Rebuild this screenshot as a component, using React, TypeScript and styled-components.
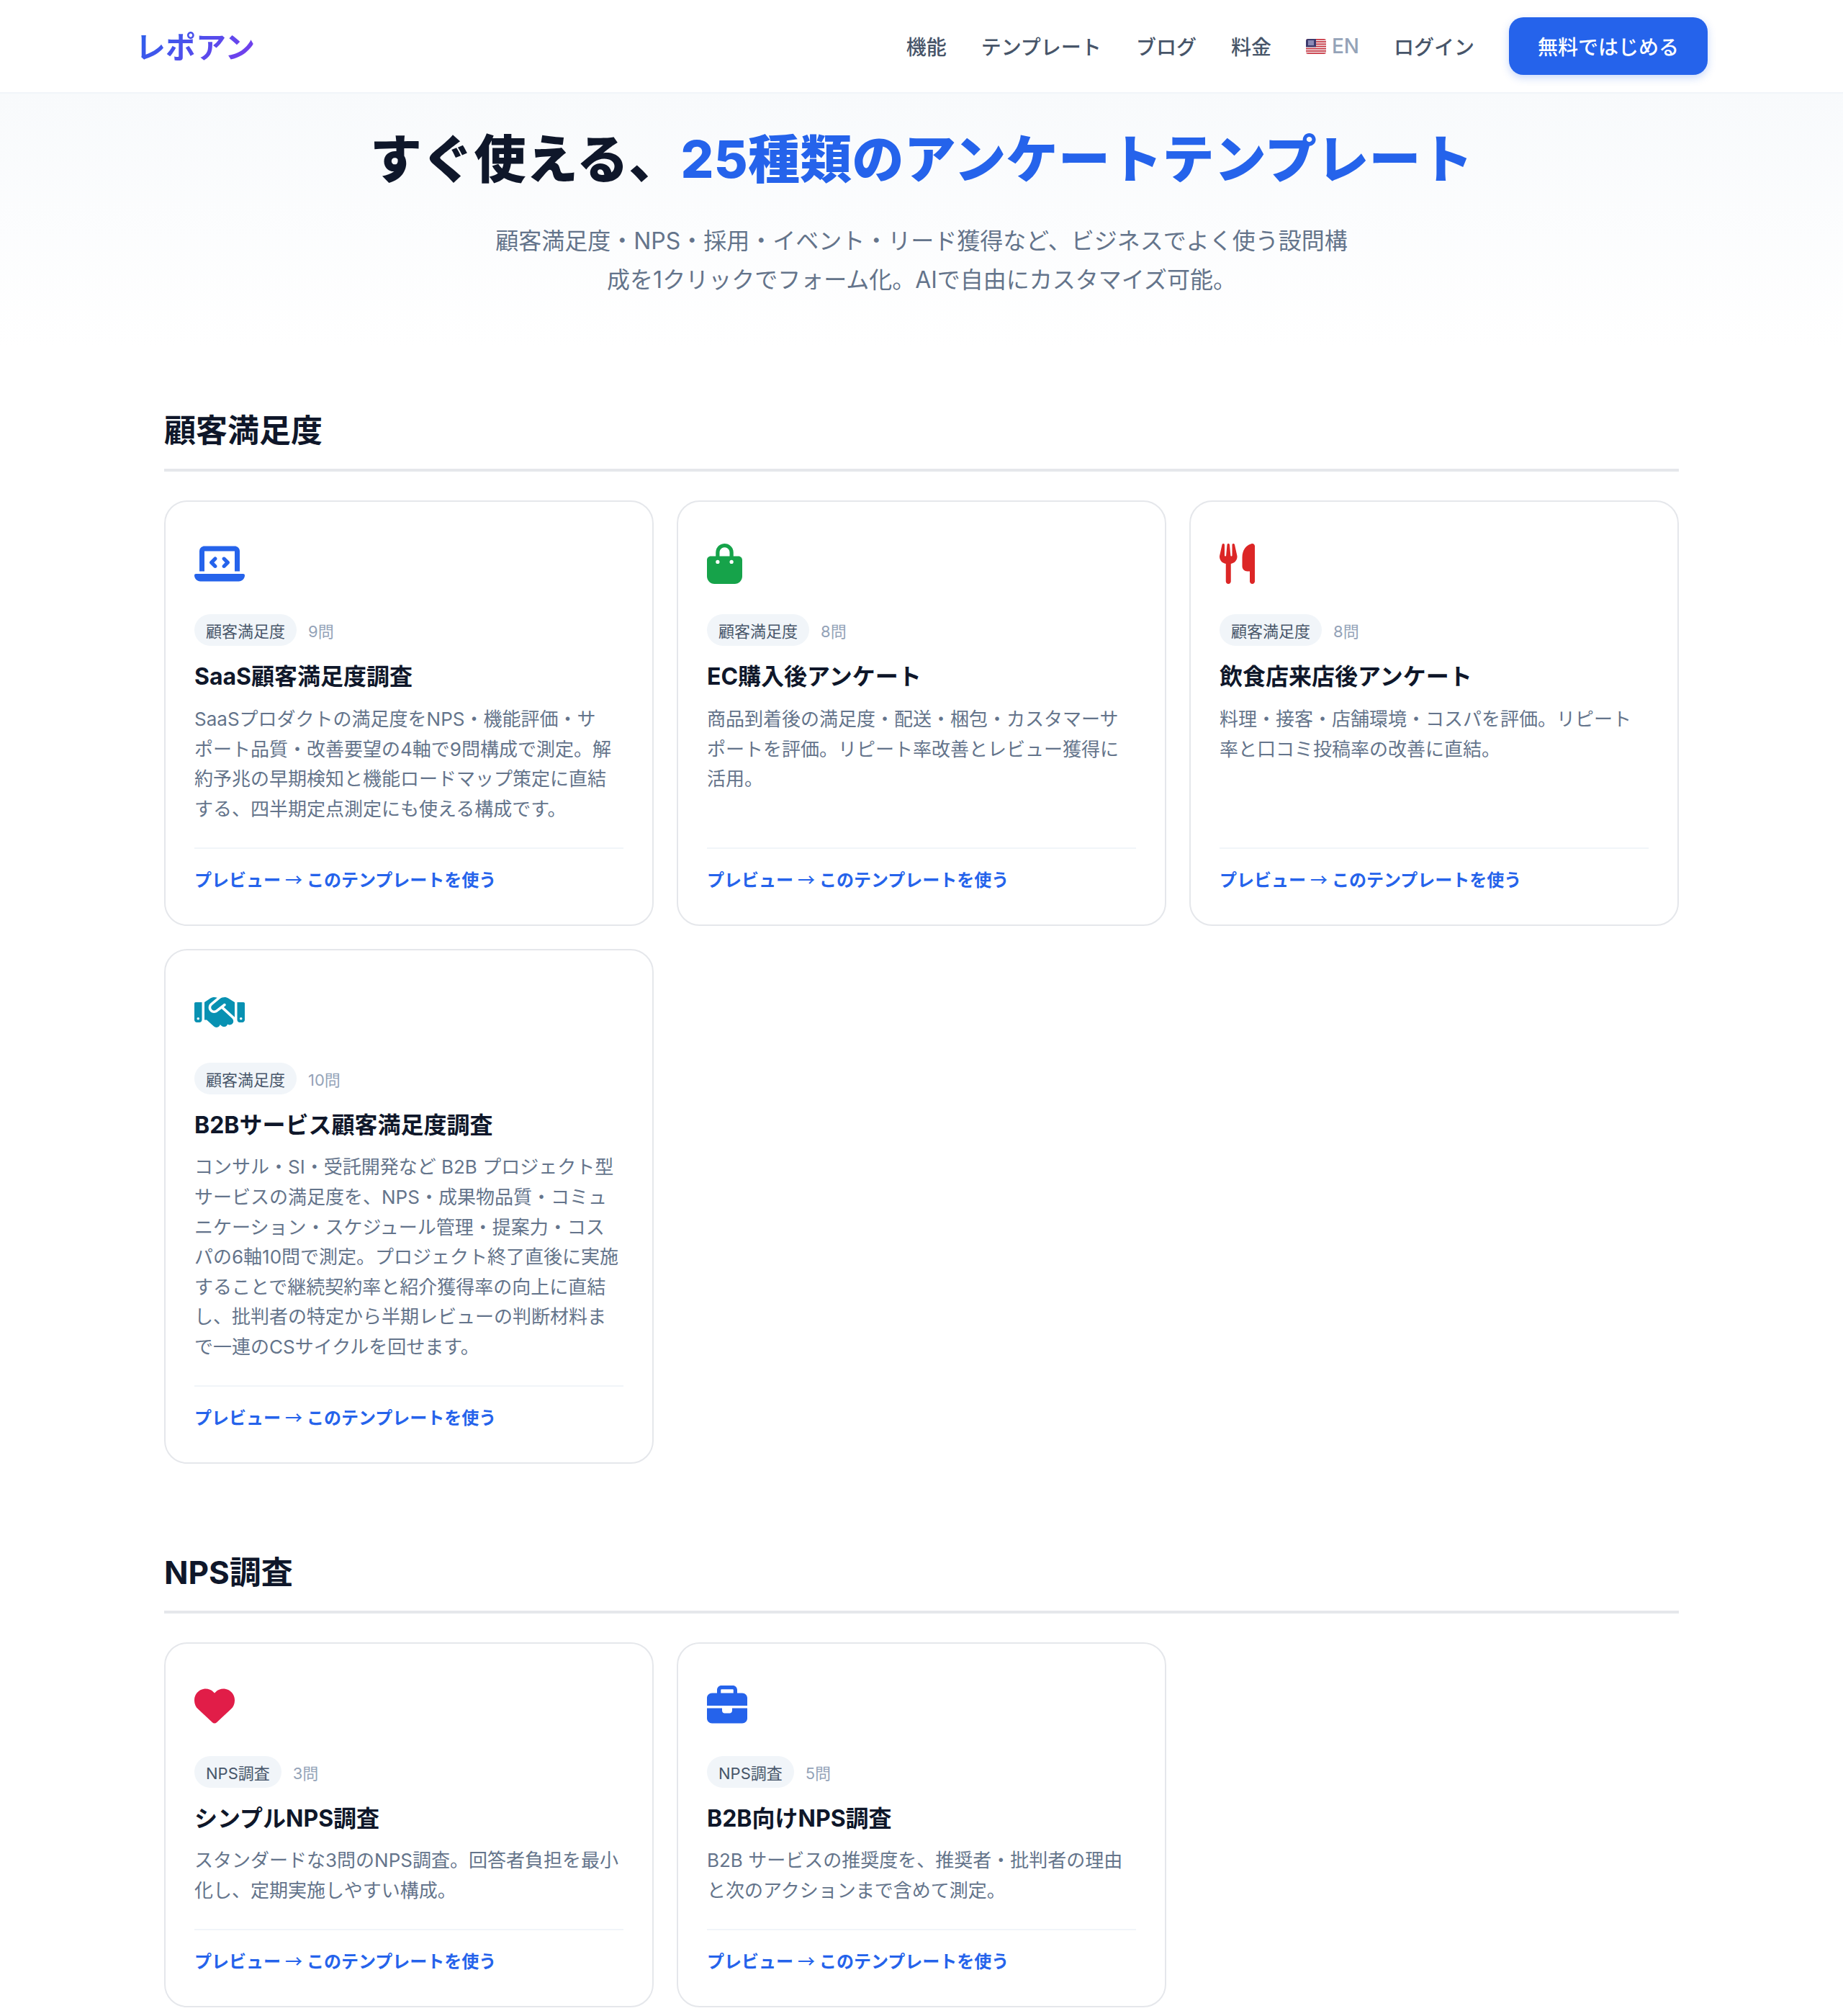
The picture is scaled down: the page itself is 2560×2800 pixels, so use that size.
import React from "react";
import styled, { createGlobalStyle } from "styled-components";
import { FaLaptopCode, FaBagShopping, FaUtensils, FaHandshake, FaHeart, FaBriefcase } from "react-icons/fa6";

const Global = createGlobalStyle`
  * { box-sizing: border-box; }
  html, body { margin: 0; padding: 0; background: #fff; }
  body { font-family: Inter, "Noto Sans CJK JP", sans-serif; color: #0f172a; }
`;

const Page = styled.div`
  line-break: strict;
`;
const Nav = styled.header`
  height: 130px;
  border-bottom: 2px solid #f1f5f9;
  background: #fff;
`;
const NavInner = styled.div`
  width: 2184px;
  height: 128px;
  margin: 0 auto;
  display: flex;
  align-items: center;
  justify-content: space-between;
`;
const Logo = styled.div`
  margin-top: -4px;
  font-size: 42px;
  font-weight: 700;
  background: linear-gradient(135deg, #2563eb, #7c3aed);
  -webkit-background-clip: text;
  background-clip: text;
  color: transparent;
`;
const NavLinks = styled.nav`
  display: flex;
  align-items: center;
  gap: 48px;
`;
const NavLink = styled.a`
  font-size: 28px;
  font-weight: 500;
  color: #475569;
`;
const Lang = styled.a`
  display: flex;
  align-items: center;
  gap: 8px;
  font-size: 28px;
  font-weight: 500;
  color: #94a3b8;
`;
const CTA = styled.a`
  display: flex;
  align-items: center;
  height: 80px;
  padding: 0 40px;
  border-radius: 20px;
  background: #2563eb;
  color: #fff;
  font-size: 28px;
  font-weight: 500;
  box-shadow: 0 4px 12px rgba(37, 99, 235, 0.25);
`;
const Hero = styled.section`
  padding: 48px 0 65px;
  background: linear-gradient(180deg, #f8fafc, #fff);
  text-align: center;
`;
const Title = styled.h1`
  margin: 0 0 44px;
  font-size: 72px;
  font-weight: 800;
  line-height: 1.2;
  letter-spacing: 0.3px;
  color: #0f172a;
`;
const Accent = styled.span`
  color: #2563eb;
`;
const Sub = styled.p`
  width: 1200px;
  margin: 0 auto;
  font-size: 32px;
  line-height: 54px;
  color: #64748b;
`;
const Main = styled.main`
  width: 2104px;
  margin: 0 auto;
  padding-top: 82px;
`;
const Section = styled.section`
  margin-bottom: 116px;
`;
const Heading = styled.h2`
  margin: 0 0 40px;
  padding-bottom: 24px;
  border-bottom: 4px solid #e5e7eb;
  font-size: 44px;
  font-weight: 700;
  color: #0f172a;
`;
const Grid = styled.div`
  display: grid;
  grid-template-columns: repeat(3, 680px);
  gap: 32px;
`;
const Card = styled.article`
  display: flex;
  flex-direction: column;
  padding: 40px 40px 46px;
  border: 2px solid #e5e7eb;
  border-radius: 32px;
  background: #fff;
`;
const IconWrap = styled.div<{ $c: string; $w: number }>`
  height: 56px;
  margin: 18px 0 42px;
  color: ${(p) => p.$c};
  svg { display: block; height: 56px; width: ${(p) => p.$w}px; }
`;
const Meta = styled.div`
  display: flex;
  align-items: center;
  gap: 16px;
  margin-bottom: 21px;
`;
const Badge = styled.span`
  padding: 6px 16px;
  border-radius: 999px;
  background: #f1f5f9;
  font-size: 22px;
  color: #475569;
`;
const Count = styled.span`
  font-size: 22px;
  color: #94a3b8;
`;
const CardTitle = styled.h3`
  margin: 0 0 15px;
  font-size: 32px;
  font-weight: 700;
  line-height: 1.4;
  color: #0f172a;
`;
const Desc = styled.p`
  flex: 1;
  margin: 0 0 32px;
  padding-right: 4px;
  font-size: 26px;
  line-height: 1.6;
  color: #64748b;
`;
const Foot = styled.div`
  padding-top: 24px;
  border-top: 2px solid #f1f5f9;
`;
const CardLink = styled.a`
  font-size: 24px;
  font-weight: 600;
  color: #2563eb;
`;
const Arrow = styled.span`
  font-family: "Noto Sans CJK JP", sans-serif;
  font-weight: 500;
`;

const Flag = () => (
  <svg width="28" height="21" viewBox="0 0 28 21">
    <defs>
      <clipPath id="r"><rect width="28" height="21" rx="3" /></clipPath>
    </defs>
    <g clipPath="url(#r)">
      <rect width="28" height="21" fill="#f1f1f1" />
      {[0, 3.2, 6.4, 9.6, 12.8, 16, 19.2].map((y) => (
        <rect key={y} y={y} width="28" height="1.7" fill="#c8313e" />
      ))}
      <rect width="14" height="11.3" fill="#3c3b6e" />
      <rect x="3" y="2" width="8" height="7" fill="#8a8ab5" />
    </g>
  </svg>
);

type Item = { icon: React.ReactNode; w: number; color: string; tag: string; count: string; title: string; desc: string };

const satisfaction: Item[] = [
  { icon: <FaLaptopCode />, w: 70, color: "#2563eb", tag: "顧客満足度", count: "9問", title: "SaaS顧客満足度調査", desc: "SaaSプロダクトの満足度をNPS・機能評価・サポート品質・改善要望の4軸で9問構成で測定。解約予兆の早期検知と機能ロードマップ策定に直結する、四半期定点測定にも使える構成です。" },
  { icon: <FaBagShopping />, w: 49, color: "#16a34a", tag: "顧客満足度", count: "8問", title: "EC購入後アンケート", desc: "商品到着後の満足度・配送・梱包・カスタマーサポートを評価。リピート率改善とレビュー獲得に活用。" },
  { icon: <FaUtensils />, w: 49, color: "#dc2626", tag: "顧客満足度", count: "8問", title: "飲食店来店後アンケート", desc: "料理・接客・店舗環境・コスパを評価。リピート率と口コミ投稿率の改善に直結。" },
  { icon: <FaHandshake />, w: 70, color: "#0891b2", tag: "顧客満足度", count: "10問", title: "B2Bサービス顧客満足度調査", desc: "コンサル・SI・受託開発など B2B プロジェクト型サービスの満足度を、NPS・成果物品質・コミュニケーション・スケジュール管理・提案力・コスパの6軸10問で測定。プロジェクト終了直後に実施することで継続契約率と紹介獲得率の向上に直結し、批判者の特定から半期レビューの判断材料まで一連のCSサイクルを回せます。" },
];
const nps: Item[] = [
  { icon: <FaHeart />, w: 56, color: "#e11d48", tag: "NPS調査", count: "3問", title: "シンプルNPS調査", desc: "スタンダードな3問のNPS調査。回答者負担を最小化し、定期実施しやすい構成。" },
  { icon: <FaBriefcase />, w: 56, color: "#2563eb", tag: "NPS調査", count: "5問", title: "B2B向けNPS調査", desc: "B2B サービスの推奨度を、推奨者・批判者の理由と次のアクションまで含めて測定。" },
];

const TemplateCard = ({ item }: { item: Item }) => (
  <Card>
    <IconWrap $c={item.color} $w={item.w}>{item.icon}</IconWrap>
    <Meta>
      <Badge>{item.tag}</Badge>
      <Count>{item.count}</Count>
    </Meta>
    <CardTitle>{item.title}</CardTitle>
    <Desc>{item.desc}</Desc>
    <Foot>
      <CardLink>プレビュー <Arrow>→</Arrow> このテンプレートを使う</CardLink>
    </Foot>
  </Card>
);

export default function App() {
  return (
    <Page lang="ja">
      <Global />
      <Nav>
        <NavInner>
          <Logo>レポアン</Logo>
          <NavLinks>
            <NavLink>機能</NavLink>
            <NavLink>テンプレート</NavLink>
            <NavLink>ブログ</NavLink>
            <NavLink>料金</NavLink>
            <Lang><Flag />EN</Lang>
            <NavLink>ログイン</NavLink>
            <CTA>無料ではじめる</CTA>
          </NavLinks>
        </NavInner>
      </Nav>
      <Hero>
        <Title>すぐ使える、<Accent>25種類のアンケートテンプレート</Accent></Title>
        <Sub>顧客満足度・NPS・採用・イベント・リード獲得など、ビジネスでよく使う設問構成を1クリックでフォーム化。AIで自由にカスタマイズ可能。</Sub>
      </Hero>
      <Main>
        <Section>
          <Heading>顧客満足度</Heading>
          <Grid>{satisfaction.map((i) => <TemplateCard key={i.title} item={i} />)}</Grid>
        </Section>
        <Section>
          <Heading>NPS調査</Heading>
          <Grid>{nps.map((i) => <TemplateCard key={i.title} item={i} />)}</Grid>
        </Section>
      </Main>
    </Page>
  );
}
